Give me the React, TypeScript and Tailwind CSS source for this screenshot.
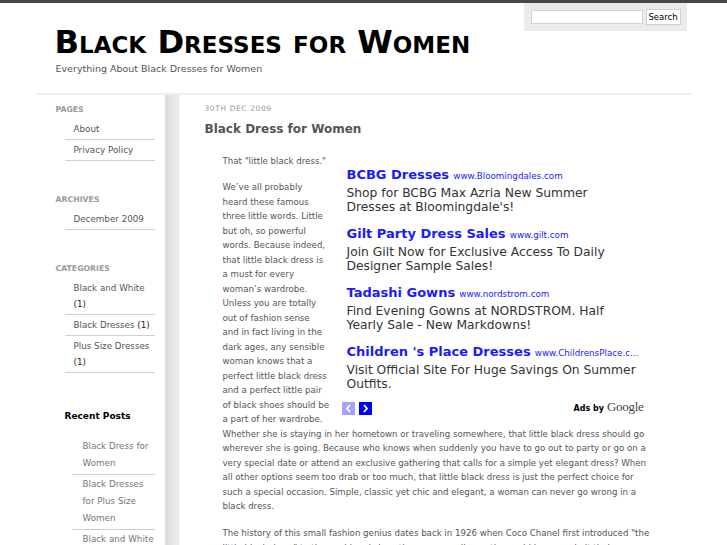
const pages = ["About", "Privacy Policy"];
const archives = ["December 2009"];
const categories = [
  { name: "Black and White", count: 1 },
  { name: "Black Dresses", count: 1 },
  { name: "Plus Size Dresses", count: 1 },
];
const recent = ["Black Dress for Women", "Black Dresses for Plus Size Women", "Black and White Dresses"];

const ads = [
  { title: "BCBG Dresses", url: "www.Bloomingdales.com", text: "Shop for BCBG Max Azria New Summer Dresses at Bloomingdale's!" },
  { title: "Gilt Party Dress Sales", url: "www.gilt.com", text: "Join Gilt Now for Exclusive Access To Daily Designer Sample Sales!" },
  { title: "Tadashi Gowns", url: "www.nordstrom.com", text: "Find Evening Gowns at NORDSTROM. Half Yearly Sale - New Markdowns!" },
  { title: "Children 's Place Dresses", url: "www.ChildrensPlace.c...", text: "Visit Official Site For Huge Savings On Summer Outfits." },
];

// lines of the post, broken as on the live page
const storyLines = [
  "We’ve all probably",
  "heard these famous",
  "three little words. Little",
  "but oh, so powerful",
  "words. Because indeed,",
  "that little black dress is",
  "a must for every",
  "woman’s wardrobe.",
  "Unless you are totally",
  "out of fashion sense",
  "and in fact living in the",
  "dark ages, any sensible",
  "woman knows that a",
  "perfect little black dress",
  "and a perfect little pair",
  "of black shoes should be",
  "a part of her wardrobe.",
  "Whether she is staying in her hometown or traveling somewhere, that little black dress should go",
  "wherever she is going. Because who knows when suddenly you have to go out to party or go on a",
  "very special date or attend an exclusive gathering that calls for a simple yet elegant dress? When",
  "all other options seem too drab or too much, that little black dress is just the perfect choice for",
  "such a special occasion. Simple, classic yet chic and elegant, a woman can never go wrong in a",
  "black dress.",
];

const historyLines = [
  "The history of this small fashion genius dates back in 1926 when Coco Chanel first introduced \"the",
  "little black dress\" to the world and since then women all over the world have made it their own",
  "fashion staple.",
];

const WidgetTitle = ({ children }: { children: React.ReactNode }) => (
  <h3 className="pl-[19px] text-[7.75px] leading-[10px] font-bold uppercase text-[#999] mb-[4px]">{children}</h3>
);

const AdBlock = () => (
  <div className="float-right w-[318px] h-[266px] ml-[5px] pt-[12px] font-['DejaVu_Sans',sans-serif]">
    {ads.map((ad) => (
      <div key={ad.title} className="pl-[9px] mb-[11px]">
        <div className="h-[18px] text-[13px] leading-[18px] whitespace-nowrap text-[#1a1aff]">
          <span className="font-bold">{ad.title}</span>{" "}
          <span className="text-[8.75px] leading-[18px]">{ad.url}</span>
        </div>
        <p className="mt-[2px] w-[291.5px] text-[12.3px] leading-[14px] text-[#333]">{ad.text}</p>
      </div>
    ))}
    <div className="-mt-[2px] flex items-center justify-between pl-[4px] pr-[12px]">
      <div className="flex gap-[4px]">
        <span className="w-[13px] h-[13px] bg-[#a3a3ff] flex items-center justify-center">
          <svg width="7" height="9" viewBox="0 0 7 9"><path d="M5 1 L2 4.5 L5 8" stroke="#fff" strokeWidth="1.8" fill="none" /></svg>
        </span>
        <span className="w-[13px] h-[13px] bg-[#0000ee] flex items-center justify-center">
          <svg width="7" height="9" viewBox="0 0 7 9"><path d="M2 1 L5 4.5 L2 8" stroke="#fff" strokeWidth="1.8" fill="none" /></svg>
        </span>
      </div>
      <div className="flex items-baseline gap-[3px] text-black">
        <span className="text-[8px] font-bold">Ads by</span>
        <span className="text-[13px] font-['Liberation_Serif',serif] text-[#444] tracking-[-0.3px]">Google</span>
      </div>
    </div>
  </div>
);

export default function App() {
  return (
    <div className="min-h-screen bg-white font-['DejaVu_Sans',sans-serif]">
      <div className="h-[3px] bg-[#464646]" />
      <div className="w-[654px] mx-auto">
        {/* header */}
        <div className="h-[90px] flex justify-between items-start">
          <div className="pt-[23px] pl-[18px]">
            <h1 className="text-[32.2px] leading-[32px] font-bold text-black [font-variant:small-caps]">Black Dresses for Women</h1>
            <p className="mt-[5px] pl-[1px] text-[9.5px] leading-[12px] text-[#555]">Everything About Black Dresses for Women</p>
          </div>
          <div className="mr-[4px] w-[163px] h-[28px] bg-[#ebebeb] flex items-start pl-[7px] gap-[3px]">
            <input className="mt-[7px] w-[112px] h-[14px] bg-white border border-[#d4d4d4] outline-none" />
            <button className="mt-[6px] w-[35px] h-[16px] bg-white border border-[#d0d0d0] text-[8.5px] leading-[14px] text-black">Search</button>
          </div>
        </div>

        <div className="border-t-2 border-[#efefef] flex">
          {/* sidebar */}
          <aside className="w-[128px] shrink-0 pt-[10px]">
            <WidgetTitle>Pages</WidgetTitle>
            <ul className="ml-[28px] mr-[10px] text-[8.75px] text-[#555]">
              {pages.map((p) => (
                <li key={p} className="pl-[9px] py-[2px] leading-[16px] border-b border-[#cfcfcf]">{p}</li>
              ))}
            </ul>

            <div className="mt-[34px]">
              <WidgetTitle>Archives</WidgetTitle>
              <ul className="ml-[28px] mr-[10px] text-[8.75px] text-[#555]">
                {archives.map((p) => (
                  <li key={p} className="pl-[9px] py-[2px] leading-[16px] border-b border-[#cfcfcf]">{p}</li>
                ))}
              </ul>
            </div>

            <div className="mt-[34px]">
              <WidgetTitle>Categories</WidgetTitle>
              <ul className="ml-[28px] mr-[10px] text-[8.75px] text-[#555]">
                {categories.map((c) => (
                  <li key={c.name} className="pl-[9px] py-[2px] leading-[16px] border-b border-[#cfcfcf]">
                    {c.name} <span className="text-[#222]">({c.count})</span>
                  </li>
                ))}
              </ul>
            </div>

            <div className="mt-[37px]">
              <h3 className="pl-[28px] text-[9px] leading-[12px] font-bold text-black mb-[15px]">Recent Posts</h3>
              <ul className="ml-[35px] mr-[10px] text-[8.75px] text-[#777]">
                {recent.map((r) => (
                  <li key={r} className="pl-[11px] pt-[1px] pb-[2px] leading-[17px] border-b border-[#cfcfcf]">{r}</li>
                ))}
              </ul>
            </div>
          </aside>

          {/* divider strip */}
          <div className="w-[14px] shrink-0 bg-gradient-to-r from-[#d9d9d9] to-[#eeeeee] border-r border-[#e2e2e2]" />

          {/* main */}
          <main className="flex-1 pl-[26px] pr-[35px] pt-[9px]">
            <div className="text-[7.5px] leading-[10px] tracking-[0.6px] text-[#999] uppercase">30th Dec 2009</div>
            <h2 className="mt-[7px] text-[12px] leading-[16px] font-bold text-[#555]">Black Dress for Women</h2>

            <div className="mt-[17px] pl-[18px] text-[8.65px] leading-[14.5px] text-[#555]">
              <AdBlock />
              <p className="mb-[11.5px]">That "little black dress."</p>
              <p className="mb-[12.5px] whitespace-nowrap">
                {storyLines.map((l) => (
                  <span key={l}>{l}<br /></span>
                ))}
              </p>
              <p className="whitespace-nowrap">
                {historyLines.map((l) => (
                  <span key={l}>{l}<br /></span>
                ))}
              </p>
            </div>
          </main>
        </div>
      </div>
    </div>
  );
}
